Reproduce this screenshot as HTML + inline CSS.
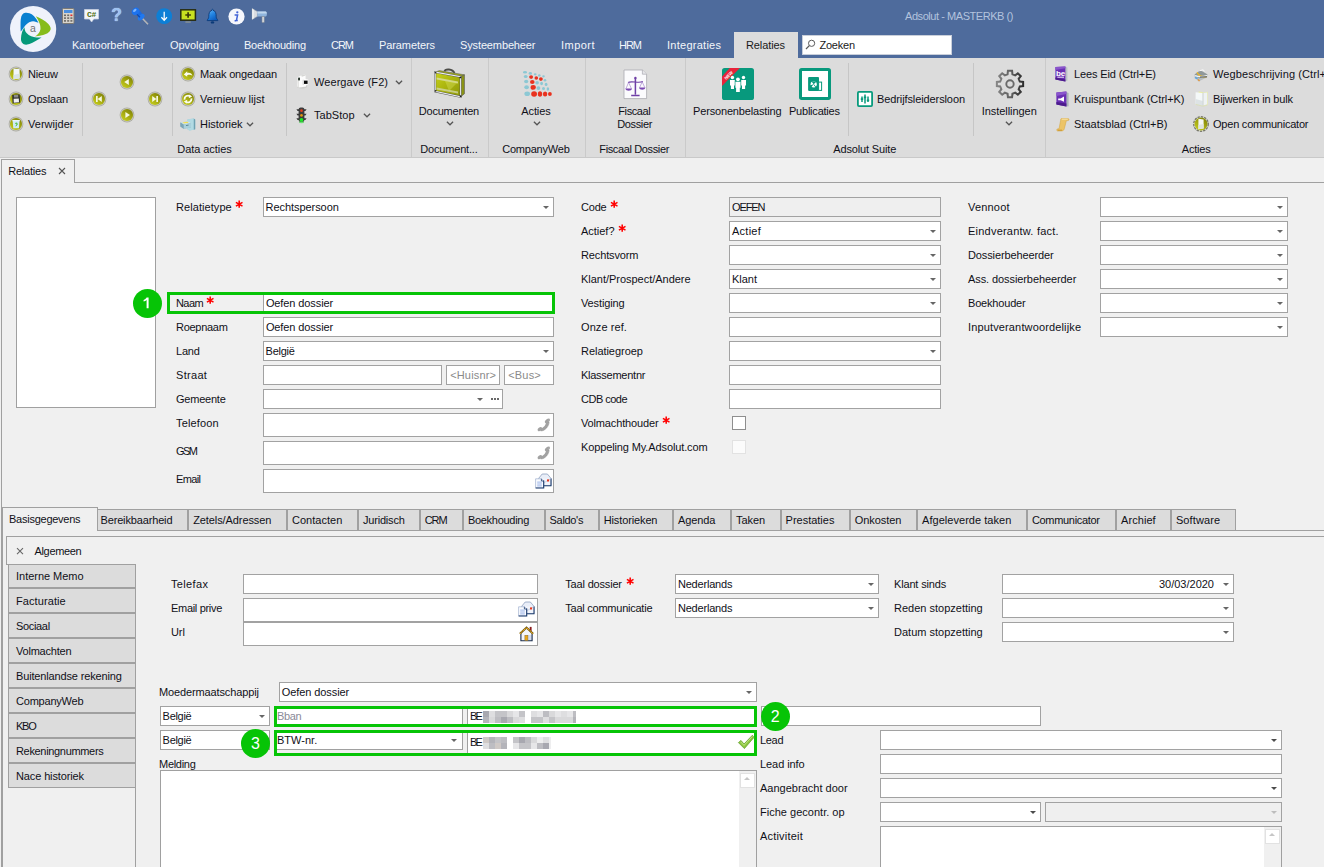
<!DOCTYPE html><html><head><meta charset="utf-8"><title>Adsolut</title><style>
*{box-sizing:border-box;margin:0;padding:0}
html,body{width:1324px;height:867px;overflow:hidden;background:#f0f0f0}
body{position:relative;font-family:"Liberation Sans",sans-serif;font-size:11px;color:#101018;line-height:13px}
.a{position:absolute}
.t{position:absolute;white-space:nowrap;line-height:13px;height:13px}
.c{position:absolute;white-space:nowrap;line-height:13px;height:13px;text-align:center}
.in{position:absolute;background:#fff;border:1px solid #a2a2a2;white-space:nowrap;overflow:hidden;padding-left:3px;font-size:11px}
.dis{background:#efefef}
.arr{position:absolute;width:0;height:0;border-left:3.3px solid transparent;border-right:3.3px solid transparent;border-top:3.4px solid #666}
.red{color:#f00000;font-size:17px;font-weight:bold;position:absolute;line-height:13px}
.vs{position:absolute;width:1px;background:#c6c6c6}
.tab{position:absolute;top:509px;height:21px;background:#dcdcdc;border:1px solid #a0a0a0;border-bottom:none;padding-left:4px;line-height:21px;white-space:nowrap}
.sb{position:absolute;left:8px;width:128px;height:25px;background:#dcdcdc;border:1px solid #a0a0a0;padding-left:7px;line-height:23px;white-space:nowrap}
.gb{position:absolute;border:3px solid #06c406}
.num{position:absolute;width:29.6px;height:29.6px;border-radius:50%;background:#06c406;color:#fff;font-size:16px;text-align:center;line-height:29.6px}
.chev{position:absolute;width:8px;height:5px}
</style></head><body>
<div class="a" style="left:0;top:0;width:1324px;height:58px;background:#4e6b9c"></div>
<svg class="a" style="left:9px;top:5px" width="48" height="48" viewBox="0 0 48 48">
<circle cx="24.1" cy="24" r="23.1" fill="#eff2fb"/>
<path d="M11.70 26.60 L11.55 21.85 Q11.40 17.10 11.80 14.05 Q12.20 11.00 13.35 9.60 Q14.50 8.20 16.30 7.85 Q18.10 7.50 20.45 8.35 Q22.80 9.20 24.85 11.10 Q26.90 13.00 29.50 17.80 L29.50 17.80 L27.15 16.90 Q24.80 16.00 22.45 16.50 Q20.10 17.00 18.10 18.70 Q16.10 20.40 14.80 22.40 Q13.50 24.40 11.70 26.60Z" fill="#087fd0"/>
<path d="M26.80 11.30 L30.15 12.75 Q33.50 14.20 36.55 16.60 Q39.60 19.00 40.85 21.05 Q42.10 23.10 41.55 24.85 Q41.00 26.60 38.55 28.30 Q36.10 30.00 26.00 31.60 L26.00 31.60 L28.05 30.00 Q30.10 28.40 30.95 26.10 Q31.80 23.80 31.30 21.10 Q30.80 18.40 29.80 16.40 Q28.80 14.40 26.80 11.30Z" fill="#86bc1c"/>
<path d="M15.40 22.30 L14.05 24.70 Q12.70 27.10 12.25 30.45 Q11.80 33.80 12.15 35.85 Q12.50 37.90 14.30 38.90 Q16.10 39.90 18.10 39.60 Q20.10 39.30 23.45 37.65 Q26.80 36.00 32.60 32.50 L32.60 32.50 L30.00 32.50 Q27.40 32.50 24.75 32.00 Q22.10 31.50 19.75 29.95 Q17.40 28.40 16.55 26.75 Q15.70 25.10 15.40 22.30Z" fill="#06997a"/>
<text x="23.8" y="27.4" font-size="10.5" fill="#707070" text-anchor="middle" style="font-family:'Liberation Sans',sans-serif">a</text>
</svg>
<svg class="a" style="left:62px;top:8px" width="13" height="16" viewBox="0 0 13 16">
<rect x="0.5" y="0.5" width="11.5" height="15" rx="1" fill="#d8d4cc" stroke="#7d7a74"/>
<rect x="2" y="2" width="8.5" height="3" fill="#4a8fe0"/>
<g fill="#6c6a66"><rect x="2" y="6.5" width="2" height="1.6"/><rect x="5.2" y="6.5" width="2" height="1.6"/><rect x="2" y="9.3" width="2" height="1.6"/><rect x="5.2" y="9.3" width="2" height="1.6"/><rect x="8.4" y="9.3" width="2" height="1.6"/><rect x="2" y="12.1" width="2" height="1.6"/><rect x="5.2" y="12.1" width="2" height="1.6"/><rect x="8.4" y="12.1" width="2" height="1.6"/></g>
<rect x="8.4" y="6.5" width="2" height="1.6" fill="#e03030"/>
</svg>
<svg class="a" style="left:84px;top:9px" width="15" height="14" viewBox="0 0 15 14">
<path d="M0.5 0.5 H14.5 V10 H9.8 L7.6 13 L5.4 10 H0.5 Z" fill="#f3f6fb" stroke="#c6cfdf" stroke-width="0.8"/>
<text x="7.5" y="8" font-size="8" font-weight="bold" fill="#4f6d10" text-anchor="middle" style="font-family:'Liberation Mono',monospace;letter-spacing:-0.3px">C#</text>
</svg>
<div class="a" style="left:110px;top:6.4px;width:13px;height:18px;font-size:17.5px;line-height:18px;color:#9cc2f2;font-weight:bold;text-align:center;text-shadow:0 0 1px #e4eefc">?</div>
<svg class="a" style="left:131px;top:7px" width="18" height="18" viewBox="0 0 18 18">
<line x1="11" y1="11" x2="17" y2="17.2" stroke="#c4c4c4" stroke-width="1.3"/>
<line x1="11.4" y1="10.8" x2="17.2" y2="16.8" stroke="#8a8a8a" stroke-width="0.5"/>
<path d="M4 5 L8.4 3 L12.6 8.6 L8.4 11.4Z" fill="#1a6ae0"/>
<ellipse cx="10.2" cy="10.2" rx="4" ry="2.3" fill="#1f78f0" transform="rotate(-42 10.2 10.2)"/>
<ellipse cx="4.6" cy="4.4" rx="4" ry="3.3" fill="#1c72ee" transform="rotate(-40 4.6 4.4)"/>
<ellipse cx="3.8" cy="3.4" rx="2" ry="1.2" fill="#7fb8ff" transform="rotate(-40 3.8 3.4)"/>
<path d="M6 7.4 L9 10.2" stroke="#0c48b0" stroke-width="1.2"/>
</svg>
<svg class="a" style="left:156px;top:7.8px" width="16.4" height="16.4" viewBox="0 0 17 17">
<circle cx="8.5" cy="8.5" r="8.2" fill="#0d7fd6"/>
<path d="M8.5 4 V12.4 M5.6 9.6 L8.5 12.8 L11.4 9.6" fill="none" stroke="#fff" stroke-width="1.3"/>
</svg>
<svg class="a" style="left:180px;top:9px" width="17" height="15" viewBox="0 0 17 15">
<rect x="0.8" y="0.8" width="14.6" height="10.4" fill="#c8e020" stroke="#272c12" stroke-width="1.5"/>
<path d="M8.1 3.2 V8.8 M5.3 6 H10.9" stroke="#3a3808" stroke-width="1.7"/>
<rect x="5.4" y="12.4" width="5.4" height="1.3" fill="#8c9494"/>
</svg>
<svg class="a" style="left:206px;top:8px" width="13" height="17" viewBox="0 0 13 17">
<defs><linearGradient id="bg1" x1="0" y1="0" x2="0.6" y2="1"><stop offset="0" stop-color="#6ebcf6"/><stop offset="0.55" stop-color="#2284e2"/><stop offset="1" stop-color="#0b5cc0"/></linearGradient></defs>
<path d="M6.5 1.2 C6.9 1.2 7 1.8 7 2.2 C9.6 3 10.2 5.4 10.2 8.4 C10.2 10.4 11.2 11.2 11.8 12 V12.6 H1.2 V12 C1.8 11.2 2.8 10.4 2.8 8.4 C2.8 5.4 3.4 3 6 2.2 C6 1.8 6.1 1.2 6.5 1.2Z" fill="url(#bg1)" stroke="#0b3a78" stroke-width="0.9"/>
<ellipse cx="6.5" cy="14.4" rx="1.7" ry="1.2" fill="#0b3a78"/>
</svg>
<svg class="a" style="left:227.6px;top:7.6px" width="17" height="17" viewBox="0 0 17 17">
<circle cx="8.5" cy="8.5" r="8.1" fill="#f6f7fc"/>
<circle cx="9.3" cy="4.3" r="1.15" fill="#4163d6"/>
<path d="M6.6 7 H9.6 L8.4 12.6 H9.8 M6.6 12.8 H8.2" stroke="#4163d6" stroke-width="1.5" fill="none"/>
</svg>
<svg class="a" style="left:251px;top:8px" width="17" height="16" viewBox="0 0 17 16">
<path d="M1.2 0.6 L6.4 3.6 V8.4 L1.2 11.4Z" fill="#d9dde2" stroke="#9aa2aa" stroke-width="0.6"/>
<path d="M1.2 0.6 L2.6 1.4 V10.6 L1.2 11.4Z" fill="#f4f6f8"/>
<path d="M6.4 3.4 H14.6 C16.2 3.6 16.4 8.2 14.6 8.6 H6.4Z" fill="#8fb4dc"/>
<path d="M6.4 3.4 H14.6 C15.4 3.6 15.8 4.6 15.9 5.4 H6.4Z" fill="#c2d8ee"/>
<rect x="11" y="8.6" width="2.2" height="5.8" fill="#d2d6da" stroke="#8a9096" stroke-width="0.5"/>
</svg>
<div class="t" style="left:72px;top:39px;letter-spacing:-0.023px;color:#f4f6fa">Kantoorbeheer</div>
<div class="t" style="left:170px;top:39px;letter-spacing:-0.066px;color:#f4f6fa">Opvolging</div>
<div class="t" style="left:244px;top:39px;letter-spacing:-0.222px;color:#f4f6fa">Boekhouding</div>
<div class="t" style="left:331px;top:39px;letter-spacing:-1.025px;color:#f4f6fa">CRM</div>
<div class="t" style="left:379px;top:39px;letter-spacing:-0.094px;color:#f4f6fa">Parameters</div>
<div class="t" style="left:460px;top:39px;letter-spacing:-0.128px;color:#f4f6fa">Systeembeheer</div>
<div class="t" style="left:561px;top:39px;letter-spacing:0.466px;color:#f4f6fa">Import</div>
<div class="t" style="left:619px;top:39px;letter-spacing:-1.025px;color:#f4f6fa">HRM</div>
<div class="t" style="left:667px;top:39px;letter-spacing:0.264px;color:#f4f6fa">Integraties</div>
<div class="a" style="left:734px;top:32px;width:64px;height:27px;background:#dcdcdc"></div>
<div class="t" style="left:746px;top:39px;letter-spacing:-0.106px;color:#1a1a1a">Relaties</div>
<div class="a" style="left:802px;top:35px;width:150px;height:20px;background:#fff;border:1px solid #c9cfda"></div>
<svg class="a" style="left:805px;top:39px" width="11" height="11" viewBox="0 0 11 11"><circle cx="6.6" cy="4.3" r="3.1" fill="none" stroke="#5a5a5a" stroke-width="1"/><line x1="4.3" y1="6.6" x2="1" y2="10" stroke="#5a5a5a" stroke-width="1.2"/></svg>
<div class="t" style="left:819.5px;top:39px;letter-spacing:-0.237px;color:#1a1a1a">Zoeken</div>
<div class="t" style="left:905px;top:10px;letter-spacing:-0.443px;color:#b3c3de">Adsolut - MASTERKB ()</div>
<div class="a" style="left:0;top:58px;width:1324px;height:100px;background:#dcdcdc;border-bottom:1px solid #c9c9c9"></div>
<svg width="0" height="0" style="position:absolute"><defs><linearGradient id="og" x1="0.85" y1="0" x2="0.15" y2="1"><stop offset="0" stop-color="#7e8008"/><stop offset="0.5" stop-color="#a4a810"/><stop offset="1" stop-color="#c8d01e"/></linearGradient><linearGradient id="bc" x1="0" y1="0" x2="1" y2="1"><stop offset="0" stop-color="#c8d21c"/><stop offset="0.5" stop-color="#aab40e"/><stop offset="1" stop-color="#8c960a"/></linearGradient></defs></svg>
<div class="vs" style="left:82px;top:63px;height:73px"></div>
<div class="vs" style="left:172px;top:63px;height:73px"></div>
<div class="vs" style="left:286px;top:63px;height:73px"></div>
<div class="vs" style="left:848px;top:63px;height:73px"></div>
<div class="vs" style="left:973px;top:63px;height:73px"></div>
<div class="vs" style="left:411px;top:58px;height:99px;background:#cacaca"></div>
<div class="vs" style="left:488px;top:58px;height:99px;background:#cacaca"></div>
<div class="vs" style="left:585px;top:58px;height:99px;background:#cacaca"></div>
<div class="vs" style="left:685px;top:58px;height:99px;background:#cacaca"></div>
<div class="vs" style="left:1045px;top:58px;height:99px;background:#cacaca"></div>
<svg class="a" style="left:8px;top:66px" width="16" height="16" viewBox="0 0 16 16"><circle cx="8" cy="8" r="7.4" fill="#aaaaa0"/><circle cx="8" cy="8" r="6.7" fill="#c9c9c0"/><circle cx="8" cy="8" r="6.0" fill="url(#og)"/><path d="M5.5 2.6 L11.6 3 V12.4 L5.5 13.2Z" fill="#f2f6f8"/><path d="M5.5 9 L11.6 7.6 V12.4 L5.5 13.2Z" fill="#dbe4e8"/></svg>
<svg class="a" style="left:8px;top:91px" width="16" height="16" viewBox="0 0 16 16"><circle cx="8" cy="8" r="7.4" fill="#aaaaa0"/><circle cx="8" cy="8" r="6.7" fill="#c9c9c0"/><circle cx="8" cy="8" r="6.0" fill="url(#og)"/><path d="M4.2 4 L11.6 3.6 L12.2 11.6 L4.6 12.4Z" fill="#2e2e2c"/><path d="M5.8 3.9 L10.2 3.7 L10.3 6.4 L5.9 6.6Z" fill="#8c8c8a"/><path d="M5.6 7.8 L10.8 7.5 L11 11.3 L5.8 11.8Z" fill="#f0f0f0"/></svg>
<svg class="a" style="left:8px;top:116px" width="16" height="16" viewBox="0 0 16 16"><circle cx="8" cy="8" r="7.4" fill="#aaaaa0"/><circle cx="8" cy="8" r="6.7" fill="#c9c9c0"/><circle cx="8" cy="8" r="6.0" fill="url(#og)"/><path d="M4.6 4.4 H11.6 L10.9 12.2 H5.3Z" fill="#cfeaf8"/><path d="M4.4 4 H11.8 V5.2 H4.4Z" fill="#e8f6fc"/><path d="M7.2 7.2 L9.2 8.2 L7.8 10.2 M9.2 8.2 L8.6 6.6" stroke="#4cc038" stroke-width="1" fill="none"/></svg>
<div class="t" style="left:28px;top:68px;letter-spacing:-0.141px;">Nieuw</div>
<div class="t" style="left:28px;top:93px;letter-spacing:-0.161px;">Opslaan</div>
<div class="t" style="left:28px;top:118px;letter-spacing:0.033px;">Verwijder</div>
<svg class="a" style="left:119px;top:74px" width="16" height="16" viewBox="0 0 16 16"><circle cx="8" cy="8" r="7.4" fill="#aaaaa0"/><circle cx="8" cy="8" r="6.7" fill="#c9c9c0"/><circle cx="8" cy="8" r="6.0" fill="url(#og)"/><path d="M9.8 5 V11 L5.2 8Z" fill="#f6f8e0"/></svg>
<svg class="a" style="left:119px;top:107px" width="16" height="16" viewBox="0 0 16 16"><circle cx="8" cy="8" r="7.4" fill="#aaaaa0"/><circle cx="8" cy="8" r="6.7" fill="#c9c9c0"/><circle cx="8" cy="8" r="6.0" fill="url(#og)"/><path d="M6.4 5 V11 L11 8Z" fill="#f6f8e0"/></svg>
<svg class="a" style="left:91px;top:91px" width="16" height="16" viewBox="0 0 16 16"><circle cx="8" cy="8" r="7.4" fill="#aaaaa0"/><circle cx="8" cy="8" r="6.7" fill="#c9c9c0"/><circle cx="8" cy="8" r="6.0" fill="url(#og)"/><path d="M10.8 5 V11 L6.6 8Z" fill="#f6f8e0"/><rect x="5" y="5" width="1.7" height="6" fill="#f6f8e0"/></svg>
<svg class="a" style="left:147px;top:91px" width="16" height="16" viewBox="0 0 16 16"><circle cx="8" cy="8" r="7.4" fill="#aaaaa0"/><circle cx="8" cy="8" r="6.7" fill="#c9c9c0"/><circle cx="8" cy="8" r="6.0" fill="url(#og)"/><path d="M5.2 5 V11 L9.4 8Z" fill="#f6f8e0"/><rect x="9.3" y="5" width="1.7" height="6" fill="#f6f8e0"/></svg>
<svg class="a" style="left:180px;top:66px" width="16" height="16" viewBox="0 0 16 16"><circle cx="8" cy="8" r="7.4" fill="#aaaaa0"/><circle cx="8" cy="8" r="6.7" fill="#c9c9c0"/><circle cx="8" cy="8" r="6.0" fill="url(#og)"/><path d="M3.8 8.4 L7.2 5.2 V6.8 C9.8 6.2 11.8 7.2 12.4 9.8 C11 8.6 9.2 8.6 7.2 9.2 V10.8Z" fill="#fbfcf0"/></svg>
<svg class="a" style="left:180px;top:91px" width="16" height="16" viewBox="0 0 16 16"><circle cx="8" cy="8" r="7.4" fill="#aaaaa0"/><circle cx="8" cy="8" r="6.7" fill="#c9c9c0"/><circle cx="8" cy="8" r="6.0" fill="url(#og)"/><path d="M4.5 8.6 A3.6 3.6 0 0 1 10.2 5.3" fill="none" stroke="#fbfcf0" stroke-width="1.8"/><path d="M11.5 7.4 A3.6 3.6 0 0 1 5.8 10.7" fill="none" stroke="#fbfcf0" stroke-width="1.8"/><path d="M9 3.4 L12.2 5.4 L8.8 7.2Z" fill="#fbfcf0"/><path d="M7 12.6 L3.8 10.6 L7.2 8.8Z" fill="#fbfcf0"/></svg>
<svg class="a" style="left:180px;top:118px" width="16" height="13" viewBox="0 0 16 13">
<path d="M7.4 1.4 L13.6 0.6 L15.2 1.6 V11.2 L9.6 12.6 L7.4 11.2Z" fill="#9ccbd8"/>
<path d="M13.6 0.6 L15.2 1.6 V11.2 L13.6 11.8Z" fill="#6fa2b2"/>
<path d="M7.4 1.4 L13.6 0.6 V11.8 L9.6 12.6 L7.4 11.2Z" fill="#b4dbe4" opacity="0.9"/>
<path d="M0.4 4.4 L8 3.2 L11 5 V9.4 L3.6 10.8 L0.4 8.4Z" fill="#8fb8c6"/>
<path d="M0.4 4.4 L8 3.2 L11 5 L3.6 6.4Z" fill="#d4e8ee"/>
<path d="M2.4 4.6 L7.4 3.8 L8.8 4.8 L3.8 5.6Z" fill="#f2dc4a"/>
<path d="M3.6 6.4 L11 5 V9.4 L3.6 10.8Z" fill="#a8d0dc"/>
<path d="M0.4 4.4 L3.6 6.4 V10.8 L0.4 8.4Z" fill="#7ca6b6"/>
<path d="M6 7.6 L8.6 7.1" stroke="#5e8896" stroke-width="1"/>
</svg>
<div class="t" style="left:200px;top:68px;letter-spacing:-0.158px;">Maak ongedaan</div>
<div class="t" style="left:200px;top:93px;letter-spacing:0.024px;">Vernieuw lijst</div>
<div class="t" style="left:200px;top:118px;letter-spacing:-0.036px;">Historiek</div>
<svg class="chev" style="left:246px;top:121.5px" viewBox="0 0 8 5"><path d="M0.9 0.8 L4 3.8 L7.1 0.8" fill="none" stroke="#555" stroke-width="1.25"/></svg>
<svg class="a" style="left:296px;top:74px" width="14" height="15" viewBox="0 0 14 15">
<path d="M1 12.4 C3 14.4 8 14.6 11 12.6" fill="none" stroke="#c9c9c6" stroke-width="1"/>
<path d="M1.6 3.2 L5 1.4 L8.4 0.4 L9.6 1.6 V5 L12.2 5.4 V10.6 L10 11 V12.6 L3 13.6 L1.2 12.4Z" fill="#fcfcfc"/>
<path d="M5 1.4 L8.4 0.4 L9.6 1.6 L6 2.8Z" fill="#d6d6d4"/>
<path d="M1.6 3.2 V12.4 L3 13.6 V4.4Z" fill="#e4e4e2"/>
<rect x="2.2" y="3.4" width="1.7" height="3" rx="0.6" fill="#16241a"/>
<rect x="8" y="6.6" width="3.6" height="3.3" fill="#0c0c0c"/>
<path d="M7.2 5.8 V10.8" stroke="#c4c4c4" stroke-width="0.8"/>
</svg>
<div class="t" style="left:314px;top:76px;letter-spacing:0.071px;">Weergave (F2)</div>
<svg class="chev" style="left:395px;top:79.5px" viewBox="0 0 8 5"><path d="M0.9 0.8 L4 3.8 L7.1 0.8" fill="none" stroke="#555" stroke-width="1.25"/></svg>
<svg class="a" style="left:296.4px;top:106.8px" width="11" height="17" viewBox="0 0 11 17">
<path d="M0.4 2.2 H3.4 L3 4 H1.6Z M0.4 6.8 H3.4 L3 8.6 H1.6Z M0.4 11.2 H3.4 L3 13 H1.6Z M10.6 2.2 H7.6 L8 4 H9.4Z M10.6 6.8 H7.6 L8 8.6 H9.4Z M10.6 11.2 H7.6 L8 13 H9.4Z" fill="#3a3a3a"/>
<rect x="2.6" y="0.4" width="5.8" height="14.6" rx="2" fill="#3c3c3c"/>
<circle cx="5.5" cy="3.7" r="1.35" fill="#e2401f"/><circle cx="5.5" cy="8.4" r="1.35" fill="#e0940e"/><circle cx="5.5" cy="12.9" r="1.9" fill="#22e62a"/>
<ellipse cx="5.5" cy="15.4" rx="2.6" ry="0.8" fill="#4fe058" opacity="0.8"/>
</svg>
<div class="t" style="left:314px;top:109px;letter-spacing:0.023px;">TabStop</div>
<svg class="chev" style="left:363px;top:112.5px" viewBox="0 0 8 5"><path d="M0.9 0.8 L4 3.8 L7.1 0.8" fill="none" stroke="#555" stroke-width="1.25"/></svg>
<div class="c" style="left:134.5px;width:140px;top:143px;letter-spacing:-0.052px;text-indent:-0.052px;">Data acties</div>
<svg class="a" style="left:433px;top:68px" width="34" height="31" viewBox="0 0 34 31">
<path d="M11.4 3.6 C12 0.6 19.6 0.4 21.4 5.2" fill="none" stroke="#4c4c48" stroke-width="1.9"/>
<path d="M2.2 4.1 L6.4 2.6 L31.4 6.8 L27.6 8.7Z" fill="#9aa41a" stroke="#6a6a66" stroke-width="0.6"/>
<path d="M27.6 8.7 L31.4 6.8 V25.8 L27.6 28.8Z" fill="#8c9612" stroke="#5c5c58" stroke-width="0.7"/>
<path d="M2.2 4.1 L27.6 8.7 V28.8 L2.2 23.4Z" fill="url(#bc)" stroke="#55554f" stroke-width="1.9"/>
<path d="M2.2 4.1 L27.6 8.7 V28.8 L2.2 23.4Z" fill="none" stroke="#e9ebf0" stroke-width="1.1"/>
<path d="M3.6 9.6 L25 13.6 V15.4 L3.6 11.4Z" fill="#d8dca0" opacity="0.85"/>
<path d="M3.6 19.4 L25 23.6 V25.6 L3.6 21.4Z" fill="#d2d6a4" opacity="0.8"/>
<path d="M12 13 L25 14 L16 23Z" fill="#dfe86a" opacity="0.35"/>
<circle cx="2.6" cy="4.6" r="0.9" fill="#2c2c2c"/><circle cx="27.4" cy="9.4" r="0.9" fill="#1c1c1c"/><circle cx="2.6" cy="22.8" r="0.9" fill="#2c2c2c"/><circle cx="27.6" cy="28.2" r="0.9" fill="#1c1c1c"/>
</svg>
<div class="c" style="left:379.0px;width:140px;top:105px;letter-spacing:-0.207px;text-indent:-0.207px;">Documenten</div>
<svg class="chev" style="left:446px;top:120.5px" viewBox="0 0 8 5"><path d="M0.9 0.8 L4 3.8 L7.1 0.8" fill="none" stroke="#555" stroke-width="1.25"/></svg>
<div class="c" style="left:379.0px;width:140px;top:143px;letter-spacing:-0.180px;text-indent:-0.180px;">Document...</div>
<svg class="a" style="left:520px;top:68px" width="34" height="31" viewBox="520 68 34 31"><ellipse cx="525" cy="72.3" rx="2.0" ry="1.3" fill="#8cc8d4"/><ellipse cx="530.3" cy="73.4" rx="1.7" ry="1.3" fill="#8cc8d4"/><ellipse cx="535.2" cy="74.3" rx="1.4" ry="1.1" fill="#8cc8d4"/><ellipse cx="539.3" cy="75.4" rx="1.3" ry="1.2" fill="#8cc8d4"/><ellipse cx="543.5" cy="76.3" rx="1.3" ry="1.1" fill="#8cc8d4"/><ellipse cx="525.7" cy="76.5" rx="1.9" ry="1.5" fill="#8cc8d4"/><ellipse cx="545" cy="80.2" rx="1.3" ry="1.3" fill="#8cc8d4"/><ellipse cx="526.2" cy="81.5" rx="2.1" ry="1.8" fill="#8cc8d4"/><ellipse cx="537.1" cy="82.8" rx="1.8" ry="1.8" fill="#8cc8d4"/><ellipse cx="541.6" cy="83.5" rx="1.4" ry="1.8" fill="#8cc8d4"/><ellipse cx="546.1" cy="84.4" rx="1.4" ry="1.6" fill="#8cc8d4"/><ellipse cx="526.6" cy="87.2" rx="2.3" ry="2.0" fill="#8cc8d4"/><ellipse cx="538.4" cy="88.1" rx="1.9" ry="1.9" fill="#8cc8d4"/><ellipse cx="543.5" cy="88.5" rx="1.5" ry="1.6" fill="#8cc8d4"/><ellipse cx="547.9" cy="89" rx="1.3" ry="1.7" fill="#8cc8d4"/><ellipse cx="527.2" cy="93.8" rx="2.8" ry="2.3" fill="#8cc8d4"/><ellipse cx="531.1" cy="77.1" rx="2.0" ry="1.8" fill="#e9321f"/><ellipse cx="536.3" cy="78" rx="1.8" ry="1.7" fill="#e9321f"/><ellipse cx="540.9" cy="79.1" rx="1.9" ry="1.8" fill="#e9321f"/><ellipse cx="532.3" cy="82" rx="2.3" ry="2.1" fill="#e9321f"/><ellipse cx="533.2" cy="87.4" rx="2.6" ry="2.3" fill="#e9321f"/><ellipse cx="534.1" cy="94" rx="2.9" ry="2.8" fill="#e9321f"/><ellipse cx="540" cy="94" rx="2.2" ry="2.7" fill="#e9321f"/><ellipse cx="545.1" cy="94" rx="2.2" ry="2.6" fill="#e9321f"/><ellipse cx="549.9" cy="94" rx="1.9" ry="2.1" fill="#e9321f"/></svg>
<div class="c" style="left:466.0px;width:140px;top:105px;letter-spacing:-0.091px;text-indent:-0.091px;">Acties</div>
<svg class="chev" style="left:533px;top:120.5px" viewBox="0 0 8 5"><path d="M0.9 0.8 L4 3.8 L7.1 0.8" fill="none" stroke="#555" stroke-width="1.25"/></svg>
<div class="c" style="left:466.0px;width:140px;top:143px;letter-spacing:-0.222px;text-indent:-0.222px;">CompanyWeb</div>
<svg class="a" style="left:623px;top:69px" width="25" height="31" viewBox="0 0 25 31">
<path d="M1 1 H19.4 L23.6 5.2 V29.6 H1Z" fill="#fbfbfd" stroke="#a9a9b0" stroke-width="0.8"/>
<path d="M19.4 1 V5.2 H23.6" fill="#e6e6ea" stroke="#a9a9b0" stroke-width="0.7"/>
<path d="M12.4 9 V25.4 M8.2 26.4 H16.6" stroke="#6f3fa6" stroke-width="1.5"/>
<path d="M5 13.4 C9 11.6 15.6 14.6 19.8 12.6" stroke="#6f3fa6" stroke-width="1.1" fill="none"/>
<path d="M5.6 13.4 L3 19.6 M5.6 13.4 L8.4 19.6 M19.2 12.8 L16.6 18.6 M19.2 12.8 L21.8 18.6" stroke="#9a78c6" stroke-width="0.6"/>
<path d="M2.4 19.6 H9 C8.6 22.6 2.8 22.6 2.4 19.6Z" fill="#7a48b2"/>
<path d="M16 18.6 H22.4 C22 21.6 16.4 21.6 16 18.6Z" fill="#7a48b2"/>
<circle cx="12.4" cy="9" r="1.2" fill="#6f3fa6"/>
</svg>
<div class="c" style="left:564.5px;width:140px;top:105px;letter-spacing:-0.390px;text-indent:-0.390px;">Fiscaal</div>
<div class="c" style="left:564.8px;width:140px;top:118px;letter-spacing:-0.381px;text-indent:-0.381px;">Dossier</div>
<div class="c" style="left:564.3px;width:140px;top:143px;letter-spacing:-0.370px;text-indent:-0.370px;">Fiscaal Dossier</div>
<svg class="a" style="left:722px;top:68px" width="32" height="32" viewBox="0 0 32 32">
<defs><clipPath id="pbc"><rect x="0" y="0" width="32" height="32" rx="2.6"/></clipPath></defs>
<rect x="0" y="0" width="32" height="32" rx="2.6" fill="#08997d"/>
<g clip-path="url(#pbc)"><path d="M0 8.6 L7.7 0 H17.9 L0 17.9Z" fill="#e8233a"/>
<text transform="translate(4.3 11.9) rotate(-45)" font-size="4.4" font-weight="bold" fill="#fff" style="font-family:'Liberation Sans',sans-serif;letter-spacing:-0.2px">NEW</text></g>
<g fill="#fff">
<circle cx="10.4" cy="9.5" r="1.7"/><path d="M8 11.9 H12.8 V17.6 H12 V20.9 H8.9 V17.6 H8Z"/>
<circle cx="21.5" cy="9.5" r="1.7"/><path d="M19.2 11.9 H24 V17.6 H23.1 V20.9 H20 V17.6 H19.2Z"/>
</g>
<path d="M12.9 13.2 H19 V20.4 H18.4 V24.4 H13.5 V20.4 H12.9Z" fill="#08997d"/>
<g fill="#fff"><circle cx="15.95" cy="11.3" r="1.9"/><path d="M13.4 13.7 H18.5 V19.8 H17.8 V24 H14.1 V19.8 H13.4Z"/></g>
</svg>
<div class="c" style="left:667.3px;width:140px;top:105px;letter-spacing:-0.163px;text-indent:-0.163px;">Personenbelasting</div>
<svg class="a" style="left:799px;top:68px" width="32" height="32" viewBox="0 0 32 32">
<rect x="1.5" y="1.5" width="29" height="29" rx="1.2" fill="#fff" stroke="#08997d" stroke-width="3"/>
<rect x="9.1" y="9.1" width="10.9" height="13.8" rx="1" fill="#08997d"/>
<rect x="19.6" y="14.1" width="3" height="8.3" fill="#fff" stroke="#08997d" stroke-width="1"/>
<circle cx="14.7" cy="16.3" r="3.1" fill="#fff"/>
<path d="M14.7 16.3 L12.4 13.2 L17.6 13.4Z M14.7 16.3 L11.4 17.2 L12 19.6Z" fill="#08997d"/>
<path d="M14.7 16.3 L17 19.4" stroke="#08997d" stroke-width="0.9"/>
</svg>
<div class="c" style="left:744.5px;width:140px;top:105px;letter-spacing:-0.219px;text-indent:-0.219px;">Publicaties</div>
<svg class="a" style="left:857px;top:91px" width="16" height="16" viewBox="0 0 16 16">
<rect x="0.9" y="0.9" width="14.2" height="14.2" rx="1" fill="#fff" stroke="#089a7c" stroke-width="1.8"/>
<path d="M5 5.4 V11 M8 3.6 V12.4 M11 5.4 V11" stroke="#089a7c" stroke-width="1.5"/>
<path d="M3.8 8.2 H6.2 M6.8 6.4 H9.2 M9.8 9.4 H12.2" stroke="#089a7c" stroke-width="1.7"/>
</svg>
<div class="t" style="left:877px;top:93px;letter-spacing:-0.104px;">Bedrijfsleidersloon</div>
<div class="c" style="left:794.8px;width:140px;top:143px;letter-spacing:-0.151px;text-indent:-0.151px;">Adsolut Suite</div>
<svg class="a" style="left:994.5px;top:69.3px" width="30" height="30" viewBox="0 0 30 30">
<defs><linearGradient id="gg" x1="0" y1="0" x2="1" y2="0"><stop offset="0" stop-color="#858585"/><stop offset="0.6" stop-color="#5a5a5a"/><stop offset="1" stop-color="#2c2c2c"/></linearGradient></defs>
<path d="M24.80 12.57 L28.14 12.92 L28.14 17.08 L24.80 17.43 L23.65 20.21 L25.76 22.82 L22.82 25.76 L20.21 23.65 L17.43 24.80 L17.08 28.14 L12.92 28.14 L12.57 24.80 L9.79 23.65 L7.18 25.76 L4.24 22.82 L6.35 20.21 L5.20 17.43 L1.86 17.08 L1.86 12.92 L5.20 12.57 L6.35 9.79 L4.24 7.18 L7.18 4.24 L9.79 6.35 L12.57 5.20 L12.92 1.86 L17.08 1.86 L17.43 5.20 L20.21 6.35 L22.82 4.24 L25.76 7.18 L23.65 9.79Z" fill="none" stroke="url(#gg)" stroke-width="2" stroke-linejoin="miter"/>
<circle cx="15" cy="15" r="3.7" fill="none" stroke="#6a6a6a" stroke-width="1.9"/>
</svg>
<div class="c" style="left:939.3px;width:140px;top:105px;letter-spacing:-0.059px;text-indent:-0.059px;">Instellingen</div>
<svg class="chev" style="left:1005px;top:120.5px" viewBox="0 0 8 5"><path d="M0.9 0.8 L4 3.8 L7.1 0.8" fill="none" stroke="#555" stroke-width="1.25"/></svg>
<svg class="a" style="left:1054.5px;top:66px" width="13" height="16" viewBox="0 0 13 16">
<path d="M10.2 0.8 L12.4 1.6 V14.8 L10.2 15.2Z" fill="#b9c2c4"/>
<path d="M0.4 1 L10.4 0.4 V15.4 L0.4 13.4Z" fill="#6a2fb4"/>
<path d="M0.4 1 L10.4 0.4 L10.4 2.2 L0.4 4Z" fill="#8a55cc"/>
<path d="M0.4 11.6 L10.4 13.4 V15.4 L0.4 13.4Z" fill="#4c1c8c"/>
<text x="5.6" y="10.4" font-size="8" font-weight="bold" fill="#fff" text-anchor="middle" style="font-family:'Liberation Sans',sans-serif">be</text>
<path d="M2.4 11.2 H9" stroke="#fff" stroke-width="0.9"/>
</svg>
<svg class="a" style="left:1056px;top:91px" width="13" height="16" viewBox="0 0 13 16">
<path d="M10.2 1 L12.6 2 V15.2 L10.2 15.4Z" fill="#aab6b8"/>
<path d="M0.4 1.4 L10.4 0.4 V15.4 L0.4 13.6Z" fill="#6a2fb4"/>
<path d="M0.4 1.4 L10.4 0.4 L10.4 3 L0.4 5Z" fill="#8a55cc"/>
<path d="M0.4 11 L10.4 12.6 V15.4 L0.4 13.6Z" fill="#4c1c8c"/>
<path d="M8 5.6 V10.8 L4.6 9.2 H2.2 V7.4 H4.6Z" fill="#fff"/>
</svg>
<svg class="a" style="left:1055.5px;top:117.8px" width="14" height="14" viewBox="0 0 14 14">
<path d="M5.2 0.6 H12.2 C13.4 0.8 13.2 2.6 12 2.6 H10.4 L8.4 10.4 C8 12.4 6.6 13.2 4.8 13 H1.6 C0.2 12.6 0.6 10.8 2 10.8 H3 L4.6 2.4 C4.6 1.4 4.8 0.8 5.2 0.6Z" fill="#ecc468" stroke="#d2a23c" stroke-width="0.5"/>
<path d="M5.8 1.2 H11.8" stroke="#f8e4a8" stroke-width="1"/>
<path d="M1.8 12.2 H6" stroke="#c89630" stroke-width="1"/>
</svg>
<div class="t" style="left:1074px;top:68px;letter-spacing:-0.128px;">Lees Eid (Ctrl+E)</div>
<div class="t" style="left:1074px;top:93px;letter-spacing:-0.051px;">Kruispuntbank (Ctrl+K)</div>
<div class="t" style="left:1074px;top:118px;letter-spacing:0.015px;">Staatsblad (Ctrl+B)</div>
<svg class="a" style="left:1194px;top:68.5px" width="14" height="13" viewBox="0 0 14 13">
<path d="M0.6 5.6 L6.4 1 L13.6 5.6 L13.2 8.2 L4.6 12.6 L0.6 8.6Z" fill="#b9bfc0"/>
<path d="M0.6 5.6 L6.4 1.4 L13.6 5.6 L5 9.6Z" fill="#8f989a"/>
<path d="M3 3.4 C4.6 6.6 8 8.2 12.6 7.6" stroke="#e8b628" stroke-width="1.3" fill="none"/>
<path d="M1.2 6.4 C4 8 8 8 13.2 6.6" stroke="#eef2f4" stroke-width="1.1" fill="none"/>
<path d="M5.6 1.8 L9 0.8 L10.6 2.2" stroke="#ffffff" stroke-width="0.9" fill="none"/>
<path d="M1 8.6 L3.6 9.6" stroke="#5aa4e0" stroke-width="1.6"/>
<path d="M3.8 10.4 L5.6 12" stroke="#e89430" stroke-width="1.1"/>
<path d="M6 8 L13 7.8" stroke="#3c4448" stroke-width="0.9"/>
</svg>
<svg class="a" style="left:1195px;top:91px" width="14" height="16" viewBox="0 0 14 16">
<path d="M3.6 0.4 L8 1.2 V3 L3.6 2Z" fill="#e8ec9c"/>
<path d="M8.4 1.2 L13 0.8 V14 L8.4 15Z" fill="#e4e8b4"/>
<path d="M0.6 1.2 L7.8 2 V15.2 L0.6 13.4Z" fill="#f4f8f8"/>
<path d="M8.2 2 L12.2 1.4 V13.8 L8.2 15.2Z" fill="#eef2f4"/>
<path d="M0.6 8 L7.8 10 V15.2 L0.6 13.4Z" fill="#dde3e5"/>
<path d="M8 2 V15.2" stroke="#c4cccf" stroke-width="0.7"/>
<path d="M0.6 13.4 L7.8 15.2 L12.2 13.8" stroke="#d8dcae" stroke-width="0.8" fill="none"/>
</svg>
<svg class="a" style="left:1193.4px;top:116.3px" width="16" height="16" viewBox="0 0 16 16">
<circle cx="8" cy="8" r="7.3" fill="none" stroke="#77786a" stroke-width="1.3" stroke-dasharray="2.4 1"/>
<circle cx="8" cy="8" r="6.5" fill="url(#og)"/>
<path d="M5.4 2.8 L10.6 3.4 V12.6 L5.4 13.2Z" fill="#f4f6f2"/>
<path d="M5.4 9 L10.6 8 V12.6 L5.4 13.2Z" fill="#dfe3dd"/>
</svg>
<div class="t" style="left:1213px;top:68px;letter-spacing:0.107px;">Wegbeschrijving (Ctrl+</div>
<div class="t" style="left:1213px;top:93px;letter-spacing:-0.158px;">Bijwerken in bulk</div>
<div class="t" style="left:1213px;top:118px;letter-spacing:-0.221px;">Open communicator</div>
<div class="c" style="left:1126.3px;width:140px;top:143px;letter-spacing:-0.191px;text-indent:-0.191px;">Acties</div>
<div class="a" style="left:1px;top:159px;width:74px;height:24px;border:1px solid #a0a0a0;border-bottom:none"></div>
<div class="a" style="left:74px;top:182px;width:1250px;height:1px;background:#a0a0a0"></div>
<div class="a" style="left:1px;top:182px;width:1px;height:685px;background:#a0a0a0"></div>
<div class="t" style="left:8.2px;top:165px;letter-spacing:-0.206px;">Relaties</div>
<svg class="a" style="left:58px;top:167px" width="8" height="8" viewBox="0 0 8 8"><path d="M1 1 L7 7 M7 1 L1 7" stroke="#555" stroke-width="1.1"/></svg>
<div class="a" style="left:16px;top:197px;width:140px;height:211px;background:#fff;border:1px solid #a0a0a0"></div>
<div class="t" style="left:176px;top:201px;letter-spacing:0.067px;">Relatietype</div>
<svg class="a" style="left:234.5px;top:199.7px" width="8.4" height="8.4" viewBox="-4.2 -4.2 8.4 8.4"><path d="M0 -3.6 V3.6 M-3.3 -1.9 L3.3 1.9 M-3.3 1.9 L3.3 -1.9" stroke="#ff0000" stroke-width="1.55" fill="none"/></svg>
<div class="in" style="left:263px;top:197px;width:291px;height:20px;line-height:18px;padding-left:1.60px;letter-spacing:-0.065px;">Rechtspersoon</div>
<div class="arr" style="left:542.7px;top:206.4px;"></div>
<div class="gb" style="left:167px;top:292px;width:388px;height:22px"></div>
<div class="t" style="left:176px;top:297px;letter-spacing:-0.580px;">Naam</div>
<svg class="a" style="left:206.1px;top:295.7px" width="8.4" height="8.4" viewBox="-4.2 -4.2 8.4 8.4"><path d="M0 -3.6 V3.6 M-3.3 -1.9 L3.3 1.9 M-3.3 1.9 L3.3 -1.9" stroke="#ff0000" stroke-width="1.55" fill="none"/></svg>
<div class="in" style="left:263px;top:295px;width:289px;height:16px;line-height:14px;border-top:none;border-bottom:none;border-right:none;line-height:16px;padding-left:1.90px;letter-spacing:-0.098px;">Oefen dossier</div>
<div class="t" style="left:176px;top:321px;letter-spacing:-0.287px;">Roepnaam</div>
<div class="in" style="left:263px;top:317px;width:291px;height:20px;line-height:18px;padding-left:1.90px;letter-spacing:-0.098px;">Oefen dossier</div>
<div class="t" style="left:176px;top:345px;letter-spacing:-0.190px;">Land</div>
<div class="in" style="left:263px;top:341px;width:291px;height:20px;line-height:18px;padding-left:1.60px;letter-spacing:-0.275px;">België</div>
<div class="arr" style="left:542.7px;top:350.4px;"></div>
<div class="t" style="left:176px;top:369px;letter-spacing:0.311px;">Straat</div>
<div class="in" style="left:263px;top:365px;width:179px;height:20px;line-height:18px;"></div>
<div class="in" style="left:446px;top:365px;width:54px;height:20px;line-height:18px;color:#8a8a8a;padding-left:3.20px;letter-spacing:0.153px;">&lt;Huisnr&gt;</div>
<div class="in" style="left:504px;top:365px;width:50px;height:20px;line-height:18px;color:#8a8a8a;padding-left:3.30px;letter-spacing:0.150px;">&lt;Bus&gt;</div>
<div class="t" style="left:176px;top:393px;letter-spacing:-0.223px;">Gemeente</div>
<div class="in" style="left:263px;top:389px;width:240px;height:20px;line-height:18px;"></div>
<div class="arr" style="left:476.8px;top:398.4px"></div>
<div class="a" style="left:491px;top:398px;width:2px;height:2px;background:#686868"></div><div class="a" style="left:494px;top:398px;width:2px;height:2px;background:#686868"></div><div class="a" style="left:497px;top:398px;width:2px;height:2px;background:#686868"></div>
<div class="t" style="left:176px;top:417px;letter-spacing:0.145px;">Telefoon</div>
<div class="in" style="left:263px;top:413px;width:291px;height:24px;line-height:22px;"></div>
<div class="t" style="left:176px;top:445px;letter-spacing:-1.578px;">GSM</div>
<div class="in" style="left:263px;top:441px;width:291px;height:24px;line-height:22px;"></div>
<div class="t" style="left:176px;top:473px;letter-spacing:-0.651px;">Email</div>
<div class="in" style="left:263px;top:469px;width:291px;height:24px;line-height:22px;"></div>
<svg class="a" style="left:536.6px;top:418.4px" width="14" height="14" viewBox="0 0 14 14"><path d="M3.4 11.8 C7.6 11.2 10.2 8 10.8 3.6" fill="none" stroke="#a2a2a2" stroke-width="2.9"/><ellipse cx="2.9" cy="11.1" rx="2.5" ry="1.7" transform="rotate(-38 2.9 11.1)" fill="#a2a2a2"/><ellipse cx="10.4" cy="2.9" rx="2.9" ry="1.7" transform="rotate(-38 10.4 2.9)" fill="#a2a2a2"/><path d="M4.4 13 C8.6 12.2 11.6 8.6 12.2 4.2" fill="none" stroke="#8a8a8a" stroke-width="0.5"/><path d="M12.6 0.6 L11.6 3.4" stroke="#b8b8b8" stroke-width="0.5"/></svg>
<svg class="a" style="left:536.6px;top:446.4px" width="14" height="14" viewBox="0 0 14 14"><path d="M3.4 11.8 C7.6 11.2 10.2 8 10.8 3.6" fill="none" stroke="#a2a2a2" stroke-width="2.9"/><ellipse cx="2.9" cy="11.1" rx="2.5" ry="1.7" transform="rotate(-38 2.9 11.1)" fill="#a2a2a2"/><ellipse cx="10.4" cy="2.9" rx="2.9" ry="1.7" transform="rotate(-38 10.4 2.9)" fill="#a2a2a2"/><path d="M4.4 13 C8.6 12.2 11.6 8.6 12.2 4.2" fill="none" stroke="#8a8a8a" stroke-width="0.5"/><path d="M12.6 0.6 L11.6 3.4" stroke="#b8b8b8" stroke-width="0.5"/></svg>
<svg class="a" style="left:534.9px;top:472.6px" width="17" height="16" viewBox="0 0 17 16">
<path d="M3.6 5.4 L7.2 1 H12.4 L16 5.4 V12.6 H3.6Z" fill="#e9eef8" stroke="#7f93b6" stroke-width="0.7"/>
<path d="M3.6 5.4 H16 V12.6 H3.6Z" fill="#f1f4fb"/>
<path d="M16 5.4 V12.8 H6" fill="none" stroke="#1e3d6e" stroke-width="1.1"/>
<path d="M3.8 5.6 L9.6 9.4 L15.8 5.6" fill="none" stroke="#a9b7d0" stroke-width="0.6"/>
<rect x="12" y="6.4" width="2.1" height="2.1" fill="#e8381e"/>
<path d="M0.6 5.8 H6.6 L8.6 7.8 V14.8 H0.6Z" fill="#f9fbff" stroke="#8fa3c6" stroke-width="0.6"/>
<path d="M8.7 7.6 V15 H0.6" fill="none" stroke="#1e3d6e" stroke-width="1.1"/>
<path d="M6.4 5.8 V8 H8.6" fill="none" stroke="#1e3d6e" stroke-width="0.8"/>
<path d="M2.2 9.1 H6.8 M2.2 11 H6.8 M2.2 12.9 H6.8" stroke="#7f9fe0" stroke-width="0.75"/>
</svg>
<div class="t" style="left:581px;top:201px;letter-spacing:-0.198px;">Code</div>
<div class="t" style="left:581px;top:225px;letter-spacing:-0.021px;">Actief?</div>
<div class="t" style="left:581px;top:249px;letter-spacing:-0.131px;">Rechtsvorm</div>
<div class="t" style="left:581px;top:273px;letter-spacing:-0.023px;">Klant/Prospect/Andere</div>
<div class="t" style="left:581px;top:297px;letter-spacing:-0.130px;">Vestiging</div>
<div class="t" style="left:581px;top:321px;letter-spacing:0.083px;">Onze ref.</div>
<div class="t" style="left:581px;top:345px;letter-spacing:-0.043px;">Relatiegroep</div>
<div class="t" style="left:581px;top:369px;letter-spacing:-0.259px;">Klassementnr</div>
<div class="t" style="left:581px;top:393px;letter-spacing:-0.505px;">CDB code</div>
<svg class="a" style="left:609.5px;top:199.7px" width="8.4" height="8.4" viewBox="-4.2 -4.2 8.4 8.4"><path d="M0 -3.6 V3.6 M-3.3 -1.9 L3.3 1.9 M-3.3 1.9 L3.3 -1.9" stroke="#ff0000" stroke-width="1.55" fill="none"/></svg>
<svg class="a" style="left:617.5px;top:223.7px" width="8.4" height="8.4" viewBox="-4.2 -4.2 8.4 8.4"><path d="M0 -3.6 V3.6 M-3.3 -1.9 L3.3 1.9 M-3.3 1.9 L3.3 -1.9" stroke="#ff0000" stroke-width="1.55" fill="none"/></svg>
<div class="in dis" style="left:729px;top:197px;width:212px;height:20px;line-height:18px;padding-left:2.00px;letter-spacing:-1.098px;">OEFEN</div>
<div class="in" style="left:729px;top:221px;width:212px;height:20px;line-height:18px;padding-left:2.00px;letter-spacing:0.258px;">Actief</div>
<div class="arr" style="left:929.7px;top:230.4px;"></div>
<div class="in" style="left:729px;top:245px;width:212px;height:20px;line-height:18px;"></div>
<div class="arr" style="left:929.7px;top:254.4px;"></div>
<div class="in" style="left:729px;top:269px;width:212px;height:20px;line-height:18px;padding-left:2.00px;letter-spacing:-0.018px;">Klant</div>
<div class="arr" style="left:929.7px;top:278.4px;"></div>
<div class="in" style="left:729px;top:293px;width:212px;height:20px;line-height:18px;"></div>
<div class="arr" style="left:929.7px;top:302.4px;"></div>
<div class="in" style="left:729px;top:317px;width:212px;height:20px;line-height:18px;"></div>
<div class="in" style="left:729px;top:341px;width:212px;height:20px;line-height:18px;"></div>
<div class="arr" style="left:929.7px;top:350.4px;"></div>
<div class="in" style="left:729px;top:365px;width:212px;height:20px;line-height:18px;"></div>
<div class="in" style="left:729px;top:389px;width:212px;height:20px;line-height:18px;"></div>
<div class="t" style="left:581px;top:417px;letter-spacing:-0.146px;">Volmachthouder</div>
<svg class="a" style="left:661.5px;top:415.7px" width="8.4" height="8.4" viewBox="-4.2 -4.2 8.4 8.4"><path d="M0 -3.6 V3.6 M-3.3 -1.9 L3.3 1.9 M-3.3 1.9 L3.3 -1.9" stroke="#ff0000" stroke-width="1.55" fill="none"/></svg>
<div class="t" style="left:581px;top:441px;letter-spacing:-0.122px;">Koppeling My.Adsolut.com</div>
<div class="a" style="left:732px;top:416px;width:14px;height:14px;background:#fff;border:1px solid #8e8e8e"></div>
<div class="a" style="left:732px;top:440px;width:14px;height:14px;background:#fbfbfb;border:1px solid #e2e2e2"></div>
<div class="t" style="left:968px;top:201px;letter-spacing:0.188px;">Vennoot</div>
<div class="in" style="left:1100px;top:197px;width:188px;height:20px;line-height:18px;"></div>
<div class="arr" style="left:1276.7px;top:206.4px;"></div>
<div class="t" style="left:968px;top:225px;letter-spacing:0.222px;">Eindverantw. fact.</div>
<div class="in" style="left:1100px;top:221px;width:188px;height:20px;line-height:18px;"></div>
<div class="arr" style="left:1276.7px;top:230.4px;"></div>
<div class="t" style="left:968px;top:249px;letter-spacing:-0.122px;">Dossierbeheerder</div>
<div class="in" style="left:1100px;top:245px;width:188px;height:20px;line-height:18px;"></div>
<div class="arr" style="left:1276.7px;top:254.4px;"></div>
<div class="t" style="left:968px;top:273px;letter-spacing:-0.088px;">Ass. dossierbeheerder</div>
<div class="in" style="left:1100px;top:269px;width:188px;height:20px;line-height:18px;"></div>
<div class="arr" style="left:1276.7px;top:278.4px;"></div>
<div class="t" style="left:968px;top:297px;letter-spacing:-0.180px;">Boekhouder</div>
<div class="in" style="left:1100px;top:293px;width:188px;height:20px;line-height:18px;"></div>
<div class="arr" style="left:1276.7px;top:302.4px;"></div>
<div class="t" style="left:968px;top:321px;letter-spacing:0.140px;">Inputverantwoordelijke</div>
<div class="in" style="left:1100px;top:317px;width:188px;height:20px;line-height:18px;"></div>
<div class="arr" style="left:1276.7px;top:326.4px;"></div>
<div class="a" style="left:2px;top:530px;width:1322px;height:1px;background:#a0a0a0"></div>
<div class="tab" style="left:97px;width:91px;padding-left:2.5px;letter-spacing:-0.153px;">Bereikbaarheid</div>
<div class="tab" style="left:188px;width:99px;padding-left:4.2px;letter-spacing:-0.091px;">Zetels/Adressen</div>
<div class="tab" style="left:287px;width:71px;padding-left:3.9px;letter-spacing:0.045px;">Contacten</div>
<div class="tab" style="left:358px;width:62px;padding-left:4.0px;letter-spacing:-0.200px;">Juridisch</div>
<div class="tab" style="left:420px;width:43px;padding-left:3.8px;letter-spacing:-1.125px;">CRM</div>
<div class="tab" style="left:463px;width:82px;padding-left:3.9px;letter-spacing:-0.282px;">Boekhouding</div>
<div class="tab" style="left:545px;width:54px;padding-left:3.6px;letter-spacing:-0.322px;">Saldo's</div>
<div class="tab" style="left:599px;width:74px;padding-left:3.7px;letter-spacing:-0.122px;">Historieken</div>
<div class="tab" style="left:673px;width:58px;padding-left:4.0px;letter-spacing:-0.125px;">Agenda</div>
<div class="tab" style="left:731px;width:50px;padding-left:4.0px;letter-spacing:-0.063px;">Taken</div>
<div class="tab" style="left:781px;width:69px;padding-left:3.6px;letter-spacing:-0.012px;">Prestaties</div>
<div class="tab" style="left:850px;width:67px;padding-left:3.7px;letter-spacing:-0.054px;">Onkosten</div>
<div class="tab" style="left:917px;width:110px;padding-left:4.0px;letter-spacing:0.040px;">Afgeleverde taken</div>
<div class="tab" style="left:1027px;width:89px;padding-left:3.9px;letter-spacing:-0.311px;">Communicator</div>
<div class="tab" style="left:1116px;width:55px;padding-left:4.1px;letter-spacing:0.044px;">Archief</div>
<div class="tab" style="left:1171px;width:65px;padding-left:3.9px;letter-spacing:0.113px;">Software</div>
<div class="a" style="left:2px;top:507px;width:96px;height:24px;background:#f0f0f0;border:1px solid #a0a0a0;border-bottom:none"></div>
<div class="a" style="left:2px;top:507px;width:1px;height:360px;background:#a0a0a0"></div>
<div class="t" style="left:9px;top:513px;letter-spacing:-0.250px;">Basisgegevens</div>
<div class="a" style="left:6px;top:536px;width:1318px;height:1px;background:#a0a0a0"></div>
<div class="a" style="left:6px;top:536px;width:1px;height:28px;background:#a0a0a0"></div>
<div class="a" style="left:135px;top:564px;width:1px;height:303px;background:#a0a0a0"></div>
<svg class="a" style="left:16px;top:547px" width="8" height="8" viewBox="0 0 8 8"><path d="M1 1.2 L7 7.2 M7 1.2 L1 7.2" stroke="#666" stroke-width="1.1"/></svg>
<div class="t" style="left:34.5px;top:545px;letter-spacing:-0.333px;">Algemeen</div>
<div class="a" style="left:6px;top:564px;width:130px;height:1px;background:#a0a0a0"></div>
<div class="sb" style="top:564px;height:24px;line-height:22px;letter-spacing:-0.024px;">Interne Memo</div>
<div class="sb" style="top:588px;height:25px;line-height:24px;letter-spacing:0.088px;">Facturatie</div>
<div class="sb" style="top:613px;height:25px;line-height:24px;letter-spacing:-0.329px;">Sociaal</div>
<div class="sb" style="top:638px;height:25px;line-height:24px;letter-spacing:-0.220px;">Volmachten</div>
<div class="sb" style="top:663px;height:25px;line-height:24px;letter-spacing:-0.147px;">Buitenlandse rekening</div>
<div class="sb" style="top:688px;height:25px;line-height:24px;letter-spacing:-0.210px;">CompanyWeb</div>
<div class="sb" style="top:713px;height:25px;line-height:24px;letter-spacing:-1.216px;">KBO</div>
<div class="sb" style="top:738px;height:25px;line-height:24px;letter-spacing:-0.329px;">Rekeningnummers</div>
<div class="sb" style="top:763px;height:25px;line-height:24px;letter-spacing:-0.122px;">Nace historiek</div>
<div class="t" style="left:171px;top:578px;letter-spacing:0.341px;">Telefax</div>
<div class="in" style="left:243px;top:574px;width:295px;height:20px;line-height:18px;"></div>
<div class="t" style="left:171px;top:602px;letter-spacing:-0.310px;">Email prive</div>
<div class="in" style="left:243px;top:598px;width:295px;height:24px;line-height:22px;"></div>
<div class="t" style="left:171px;top:626px;letter-spacing:-0.075px;">Url</div>
<div class="in" style="left:243px;top:622px;width:295px;height:24px;line-height:22px;"></div>
<svg class="a" style="left:518px;top:601.2px" width="17" height="16" viewBox="0 0 17 16">
<path d="M3.6 5.4 L7.2 1 H12.4 L16 5.4 V12.6 H3.6Z" fill="#e9eef8" stroke="#7f93b6" stroke-width="0.7"/>
<path d="M3.6 5.4 H16 V12.6 H3.6Z" fill="#f1f4fb"/>
<path d="M16 5.4 V12.8 H6" fill="none" stroke="#1e3d6e" stroke-width="1.1"/>
<path d="M3.8 5.6 L9.6 9.4 L15.8 5.6" fill="none" stroke="#a9b7d0" stroke-width="0.6"/>
<rect x="12" y="6.4" width="2.1" height="2.1" fill="#e8381e"/>
<path d="M0.6 5.8 H6.6 L8.6 7.8 V14.8 H0.6Z" fill="#f9fbff" stroke="#8fa3c6" stroke-width="0.6"/>
<path d="M8.7 7.6 V15 H0.6" fill="none" stroke="#1e3d6e" stroke-width="1.1"/>
<path d="M6.4 5.8 V8 H8.6" fill="none" stroke="#1e3d6e" stroke-width="0.8"/>
<path d="M2.2 9.1 H6.8 M2.2 11 H6.8 M2.2 12.9 H6.8" stroke="#7f9fe0" stroke-width="0.75"/>
</svg>
<svg class="a" style="left:519px;top:626.3px" width="16" height="16" viewBox="0 0 16 16">
<rect x="10.7" y="0.9" width="1.9" height="4.6" fill="#8c1c1c"/>
<path d="M1.9 7.6 H13.1 V14.7 H1.9Z" fill="#f3f5fa"/>
<path d="M7.5 2.4 L1.9 7.8 H13.1Z" fill="#f3f5fa"/>
<path d="M9 9 H13 V14.4 H9Z" fill="#c9d3ea" opacity="0.7"/>
<path d="M1.9 7.4 V14.7 H13.1 V7.4" fill="none" stroke="#1a2c4c" stroke-width="1.1"/>
<rect x="5.9" y="9.3" width="3" height="5.2" fill="#eba81a" stroke="#8a6a2a" stroke-width="0.5"/>
<path d="M0.9 7.7 L7.5 1.6 L14.1 7.7" fill="none" stroke="#5a4a1a" stroke-width="1.9"/>
<path d="M0.9 7.7 L7.5 1.6 L14.1 7.7" fill="none" stroke="#f0b01c" stroke-width="1.2" stroke-dasharray="1.3 0.6"/>
</svg>
<div class="t" style="left:565.3px;top:578px;letter-spacing:-0.181px;">Taal dossier</div>
<svg class="a" style="left:625.5px;top:576.7px" width="8.4" height="8.4" viewBox="-4.2 -4.2 8.4 8.4"><path d="M0 -3.6 V3.6 M-3.3 -1.9 L3.3 1.9 M-3.3 1.9 L3.3 -1.9" stroke="#ff0000" stroke-width="1.55" fill="none"/></svg>
<div class="t" style="left:565.3px;top:602px;letter-spacing:-0.243px;">Taal communicatie</div>
<div class="in" style="left:675px;top:574px;width:204px;height:20px;line-height:18px;padding-left:1.90px;letter-spacing:-0.184px;">Nederlands</div>
<div class="arr" style="left:867.7px;top:583.4px;"></div>
<div class="in" style="left:675px;top:598px;width:204px;height:20px;line-height:18px;padding-left:1.90px;letter-spacing:-0.184px;">Nederlands</div>
<div class="arr" style="left:867.7px;top:607.4px;"></div>
<div class="t" style="left:894px;top:578px;letter-spacing:-0.161px;">Klant sinds</div>
<div class="t" style="left:894px;top:602px;letter-spacing:0.002px;">Reden stopzetting</div>
<div class="t" style="left:894px;top:626px;letter-spacing:0.003px;">Datum stopzetting</div>
<div class="in" style="left:1002px;top:574px;width:232px;height:20px;line-height:18px;text-align:right;padding-right:19px">30/03/2020</div>
<div class="arr" style="left:1222.7px;top:583.4px;"></div>
<div class="in" style="left:1002px;top:598px;width:232px;height:20px;line-height:18px;"></div>
<div class="arr" style="left:1222.7px;top:607.4px;"></div>
<div class="in" style="left:1002px;top:622px;width:232px;height:20px;line-height:18px;"></div>
<div class="arr" style="left:1222.7px;top:631.4px;"></div>
<div class="t" style="left:159px;top:686px;letter-spacing:-0.130px;">Moedermaatschappij</div>
<div class="in" style="left:279px;top:682px;width:478px;height:20px;line-height:18px;padding-left:1.80px;letter-spacing:-0.090px;">Oefen dossier</div>
<div class="arr" style="left:745.7px;top:691.4px;"></div>
<div class="in" style="left:160px;top:706px;width:110px;height:20px;line-height:18px;padding-left:1.60px;letter-spacing:-0.295px;">België</div>
<div class="arr" style="left:258.7px;top:715.4px;"></div>
<div class="in" style="left:160px;top:730px;width:110px;height:20px;line-height:18px;padding-left:1.60px;letter-spacing:-0.295px;">België</div>
<div class="arr" style="left:258.7px;top:739.4px;"></div>
<div class="gb" style="left:274px;top:706px;width:483px;height:21px"></div>
<div class="in" style="left:277px;top:709px;width:186px;height:15px;line-height:13px;border:none;border-right:1px solid #a0a0a0;color:#8a8a98;line-height:14px;padding-left:0.00px;letter-spacing:-0.396px;">Bban</div>
<div class="in" style="left:467px;top:709px;width:287px;height:15px;line-height:13px;border:none;border-left:1px solid #a0a0a0;line-height:15px;padding-left:2.00px;letter-spacing:-1.875px;">BE</div>
<div class="gb" style="left:274px;top:730px;width:483px;height:26px"></div>
<div class="in" style="left:277px;top:733px;width:186px;height:17px;line-height:15px;border:none;border-right:1px solid #a0a0a0;border-bottom:1px solid #a0a0a0;line-height:14px;padding-left:0.00px;letter-spacing:0.011px;">BTW-nr.</div>
<div class="arr" style="left:451px;top:739px"></div>
<div class="in" style="left:467px;top:733px;width:287px;height:20px;line-height:18px;border:none;border-left:1px solid #a0a0a0;line-height:19px;padding-left:2.00px;letter-spacing:-1.875px;">BE</div>
<svg class="a" style="left:483px;top:711px;filter:blur(0.6px)" width="93" height="12" viewBox="0 0 93 12"><rect x="0" y="0" width="6" height="6" fill="#a8a8b0"/><rect x="0" y="6" width="6" height="6" fill="#b4b4ba"/><rect x="6" y="0" width="6" height="6" fill="#dedee0"/><rect x="6" y="6" width="6" height="6" fill="#d9d9db"/><rect x="12" y="0" width="6" height="6" fill="#c4c4c8"/><rect x="12" y="6" width="6" height="6" fill="#bdbdc2"/><rect x="18" y="0" width="6" height="6" fill="#c4c4c8"/><rect x="18" y="6" width="6" height="6" fill="#a8a8b0"/><rect x="24" y="0" width="6" height="6" fill="#d9d9db"/><rect x="24" y="6" width="6" height="6" fill="#bdbdc2"/><rect x="30" y="0" width="6" height="6" fill="#e6e6e8"/><rect x="30" y="6" width="6" height="6" fill="#d9d9db"/><rect x="36" y="0" width="6" height="6" fill="#c4c4c8"/><rect x="36" y="6" width="6" height="6" fill="#dedee0"/><rect x="48" y="0" width="6" height="6" fill="#dedee0"/><rect x="48" y="6" width="6" height="6" fill="#c4c4c8"/><rect x="54" y="0" width="6" height="6" fill="#e6e6e8"/><rect x="54" y="6" width="6" height="6" fill="#c4c4c8"/><rect x="60" y="0" width="6" height="6" fill="#bdbdc2"/><rect x="60" y="6" width="6" height="6" fill="#dedee0"/><rect x="66" y="0" width="6" height="6" fill="#d9d9db"/><rect x="66" y="6" width="6" height="6" fill="#c4c4c8"/><rect x="72" y="0" width="6" height="6" fill="#e6e6e8"/><rect x="72" y="6" width="6" height="6" fill="#d9d9db"/><rect x="78" y="0" width="6" height="6" fill="#dedee0"/><rect x="78" y="6" width="6" height="6" fill="#d9d9db"/><rect x="84" y="0" width="6" height="6" fill="#e6e6e8"/><rect x="84" y="6" width="6" height="6" fill="#d9d9db"/><rect x="90" y="0" width="6" height="6" fill="#bdbdc2"/><rect x="90" y="6" width="6" height="6" fill="#b4b4ba"/></svg>
<svg class="a" style="left:483px;top:737px;filter:blur(0.6px)" width="68" height="12" viewBox="0 0 68 12"><rect x="0" y="0" width="6" height="6" fill="#cfc9c6"/><rect x="0" y="6" width="6" height="6" fill="#dedee0"/><rect x="6" y="0" width="6" height="6" fill="#b4b4ba"/><rect x="6" y="6" width="6" height="6" fill="#bdbdc2"/><rect x="12" y="0" width="6" height="6" fill="#c4c4c8"/><rect x="12" y="6" width="6" height="6" fill="#cfc9c6"/><rect x="18" y="0" width="6" height="6" fill="#bdbdc2"/><rect x="18" y="6" width="6" height="6" fill="#b4b4ba"/><rect x="30" y="0" width="6" height="6" fill="#c4c4c8"/><rect x="30" y="6" width="6" height="6" fill="#e6e6e8"/><rect x="36" y="0" width="6" height="6" fill="#a8a8b0"/><rect x="36" y="6" width="6" height="6" fill="#c4c4c8"/><rect x="42" y="0" width="6" height="6" fill="#bdbdc2"/><rect x="42" y="6" width="6" height="6" fill="#c4c4c8"/><rect x="48" y="0" width="6" height="6" fill="#d9d9db"/><rect x="48" y="6" width="6" height="6" fill="#e6e6e8"/><rect x="54" y="0" width="6" height="6" fill="#eeeeef"/><rect x="54" y="6" width="6" height="6" fill="#bdbdc2"/><rect x="60" y="0" width="6" height="6" fill="#dedee0"/><rect x="60" y="6" width="6" height="6" fill="#a8a8b0"/><rect x="66" y="0" width="6" height="6" fill="#eeeeef"/><rect x="66" y="6" width="6" height="6" fill="#eeeeef"/></svg>
<svg class="a" style="left:737px;top:734px" width="18" height="16" viewBox="0 0 18 16">
<path d="M1.4 8.6 L4 6.4 L7 10 L15.4 1.2 L17 3.4 L7.4 14.6Z" fill="#8cc63e" stroke="#5a9a28" stroke-width="0.7"/>
<path d="M3.6 7.8 L7 11.4 L15.4 2.4" fill="none" stroke="#c4e68a" stroke-width="0.9"/>
</svg>
<div class="t" style="left:159px;top:758px;letter-spacing:-0.286px;">Melding</div>
<div class="a" style="left:160px;top:770px;width:597px;height:110px;background:#fff;border:1px solid #a0a0a0"></div>
<div class="a" style="left:739px;top:771px;width:17px;height:100px;background:#f0f0f0"></div>
<div class="a" style="left:740px;top:773px;width:15px;height:15px;background:#fff;border:1px solid #e2e2e2"></div>
<div class="arr" style="left:744.2px;top:777.4px;border-top:none;border-bottom:3.6px solid #c6c6c6"></div>
<div class="in" style="left:761px;top:706px;width:280px;height:20px;line-height:18px;"></div>
<div class="t" style="left:760px;top:734px;letter-spacing:-0.323px;">Lead</div>
<div class="in" style="left:880px;top:730px;width:402px;height:20px;line-height:18px;"></div>
<div class="arr" style="left:1270.7px;top:739.4px;border-top-color:#4c4c4c;"></div>
<div class="t" style="left:760px;top:758px;letter-spacing:-0.070px;">Lead info</div>
<div class="in" style="left:880px;top:754px;width:402px;height:20px;line-height:18px;"></div>
<div class="t" style="left:760px;top:782px;letter-spacing:0.010px;">Aangebracht door</div>
<div class="in" style="left:880px;top:778px;width:402px;height:20px;line-height:18px;"></div>
<div class="arr" style="left:1270.7px;top:787.4px;border-top-color:#4c4c4c;"></div>
<div class="t" style="left:760px;top:806px;letter-spacing:0.014px;">Fiche gecontr. op</div>
<div class="in" style="left:880px;top:802px;width:161px;height:20px;line-height:18px;"></div>
<div class="arr" style="left:1029.7px;top:811.4px;border-top-color:#4c4c4c;"></div>
<div class="in dis" style="left:1045px;top:802px;width:237px;height:20px;line-height:18px;"></div>
<div class="arr" style="left:1270.7px;top:811.4px;border-top-color:#bdbdbd;"></div>
<div class="t" style="left:760px;top:830px;letter-spacing:0.194px;">Activiteit</div>
<div class="a" style="left:880px;top:826px;width:402px;height:60px;background:#fff;border:1px solid #a0a0a0"></div>
<div class="a" style="left:1264px;top:827px;width:17px;height:50px;background:#f0f0f0"></div>
<div class="a" style="left:1265px;top:829px;width:15px;height:15px;background:#fff;border:1px solid #e2e2e2"></div>
<div class="arr" style="left:1269.2px;top:833.4px;border-top:none;border-bottom:3.6px solid #c6c6c6"></div>
<div class="num" style="left:132.7px;top:288.7px"><svg class="a" style="left:10.5px;top:8.6px" width="7" height="12" viewBox="0 0 7 12"><path d="M3.6 0.5 H5.6 V11.3 H3.6 V3 C2.8 3.8 1.8 4.3 0.6 4.6 V3 C1.9 2.5 3 1.6 3.6 0.5Z" fill="#fff"/></svg></div>
<div class="num" style="left:760.5px;top:701.6px">2</div>
<div class="num" style="left:240.7px;top:728.8px">3</div>
</body></html>
